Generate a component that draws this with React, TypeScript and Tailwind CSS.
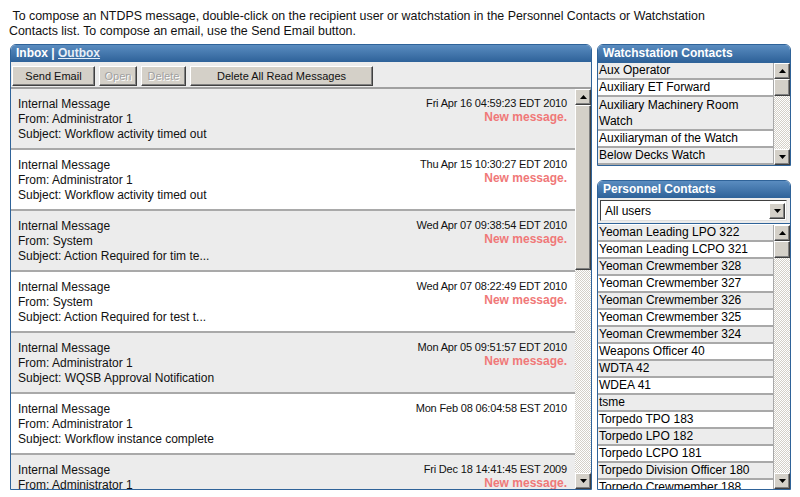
import React from "react";

const btn3d =
  "bg-[#d4d0c8] border border-t-white border-l-white border-r-[#404040] border-b-[#404040] shadow-[inset_-1px_-1px_0_#808080]";

function Arrow({ down }: { down?: boolean }) {
  return (
    <div className={`w-[16px] h-[16px] shrink-0 flex items-center justify-center ${btn3d}`}>
      <svg width="7" height="4" viewBox="0 0 7 4">
        {down ? <polygon points="0,0 7,0 3.5,4" fill="#000" /> : <polygon points="0,4 7,4 3.5,0" fill="#000" />}
      </svg>
    </div>
  );
}

function Scrollbar({ thumb }: { thumb: number }) {
  return (
    <div className="w-[16px] shrink-0 flex flex-col h-full">
      <Arrow />
      <div className={`w-[16px] shrink-0 ${btn3d}`} style={{ height: thumb }} />
      <div className="flex-1 bg-[repeating-conic-gradient(#d4d0c8_0_25%,#ffffff_0_50%)] bg-[length:2px_2px]" />
      <Arrow down />
    </div>
  );
}

const header =
  "h-[17px] shrink-0 bg-[linear-gradient(#5a8cc0,#2e6299)] text-white font-bold text-[12px] leading-[17px] px-[5px]";

const messages = [
  { from: "Administrator 1", subject: "Workflow activity timed out", date: "Fri Apr 16 04:59:23 EDT 2010", isNew: true },
  { from: "Administrator 1", subject: "Workflow activity timed out", date: "Thu Apr 15 10:30:27 EDT 2010", isNew: true },
  { from: "System", subject: "Action Required for tim te...", date: "Wed Apr 07 09:38:54 EDT 2010", isNew: true },
  { from: "System", subject: "Action Required for test t...", date: "Wed Apr 07 08:22:49 EDT 2010", isNew: true },
  { from: "Administrator 1", subject: "WQSB Approval Notification", date: "Mon Apr 05 09:51:57 EDT 2010", isNew: true },
  { from: "Administrator 1", subject: "Workflow instance complete", date: "Mon Feb 08 06:04:58 EST 2010", isNew: false },
  { from: "Administrator 1", subject: "Workflow activity timed out", date: "Fri Dec 18 14:41:45 EST 2009", isNew: true },
];

const watch = [
  "Aux Operator",
  "Auxiliary ET Forward",
  "Auxiliary Machinery Room Watch",
  "Auxiliaryman of the Watch",
  "Below Decks Watch",
];

const personnel = [
  "Yeoman Leading LPO 322",
  "Yeoman Leading LCPO 321",
  "Yeoman Crewmember 328",
  "Yeoman Crewmember 327",
  "Yeoman Crewmember 326",
  "Yeoman Crewmember 325",
  "Yeoman Crewmember 324",
  "Weapons Officer 40",
  "WDTA 42",
  "WDEA 41",
  "tsme",
  "Torpedo TPO 183",
  "Torpedo LPO 182",
  "Torpedo LCPO 181",
  "Torpedo Division Officer 180",
  "Torpedo Crewmember 188",
];

function Button({ label, w, disabled }: { label: string; w: number; disabled?: boolean }) {
  return (
    <div
      className={`h-[20px] shrink-0 flex items-center justify-center text-[11px] ${btn3d} ${
        disabled ? "text-[#a0a0a0] [text-shadow:1px_1px_0_#ffffff]" : "text-[#111]"
      }`}
      style={{ width: w }}
    >
      {label}
    </div>
  );
}

function ContactRow({ name, i }: { name: string; i: number }) {
  return (
    <div
      className={`shrink-0 border-b-2 border-[#a9a9a9] pl-[1px] text-[12px] leading-[15px] text-black ${
        i % 2 === 0 ? "bg-[#ececec]" : "bg-white"
      }`}
    >
      {name}
    </div>
  );
}

export default function App() {
  return (
    <div className="w-[800px] h-[497px] overflow-hidden bg-white text-black font-['Liberation_Sans',Arial,sans-serif]">
      <div className="pl-[9px] pt-[9px] text-[12.4px] leading-[15px] text-[#111]">
        &nbsp;To compose an NTDPS message, double-click on the recipient user or watchstation in the Personnel Contacts or Watchstation
        <br />
        Contacts list. To compose an email, use the Send Email button.
      </div>
      <div className="mt-[5px] pl-[10px] flex gap-[5px] h-[446px]">
        {/* Left panel */}
        <div className="w-[582px] h-full flex flex-col border border-[#2f6399] rounded-t-[6px] overflow-hidden">
          <div className={header}>
            Inbox | <span className="underline text-[#e6eef7]">Outbox</span>
          </div>
          <div className="h-[27px] shrink-0 bg-[#ececec] border-b-2 border-[#a0a0a0] flex gap-[4px] pl-[1px] pt-[4px]">
            <Button label="Send Email" w={83} />
            <Button label="Open" w={38} disabled />
            <Button label="Delete" w={45} disabled />
            <Button label="Delete All Read Messages" w={183} />
          </div>
          <div className="flex-1 flex min-h-0">
            <div className="flex-1 overflow-hidden">
              {messages.map((m, i) => (
                <div
                  key={i}
                  className={`h-[61px] shrink-0 border-b-2 border-[#a9a9a9] pl-[7px] pr-[8px] pt-[8px] flex justify-between ${
                    i % 2 === 0 ? "bg-[#ececec]" : "bg-white"
                  }`}
                >
                  <div className="text-[12px] leading-[15px] text-[#111]">
                    <div>Internal Message</div>
                    <div>From: {m.from}</div>
                    <div>Subject: {m.subject}</div>
                  </div>
                  <div className="text-right">
                    <div className="text-[11px] leading-[13px] tracking-[-0.18px] text-[#111]">{m.date}</div>
                    {m.isNew && (
                      <div className="text-[12px] leading-[15px] font-bold text-[#f07878]">New message.</div>
                    )}
                  </div>
                </div>
              ))}
            </div>
            <Scrollbar thumb={165} />
          </div>
        </div>

        {/* Right panel */}
        <div className="w-[194px] h-full flex flex-col">
          <div className="shrink-0 flex flex-col border border-[#2f6399] rounded-t-[6px] overflow-hidden">
            <div className={header}>Watchstation Contacts</div>
            <div className="h-[103px] flex pt-[1px] bg-[#2f6399]">
              <div className="flex-1 flex flex-col border-r border-[#a9a9a9] bg-white">
                {watch.map((w, i) => (
                  <div
                    key={w}
                    className={`shrink-0 border-b-2 border-[#a9a9a9] pl-[1px] text-[12px] text-black ${
                      i === 2 ? "leading-[16px]" : "leading-[15px]"
                    } ${i % 2 === 0 ? "bg-[#ececec]" : "bg-white"}`}
                  >
                    {i === 2 ? (
                      <>
                        Auxiliary Machinery Room
                        <br />
                        Watch
                      </>
                    ) : (
                      w
                    )}
                  </div>
                ))}
              </div>
              <Scrollbar thumb={17} />
            </div>
          </div>

          <div className="mt-[14px] flex-1 min-h-0 flex flex-col border border-[#2f6399] rounded-t-[6px] overflow-hidden">
            <div className={header}>Personnel Contacts</div>
            <div className="h-[26px] shrink-0 bg-[#ececec] border-b border-[#2f6399] pl-[2px] pr-[3px] pt-[2px]">
              <div className="h-[21px] bg-white border border-t-[#404040] border-l-[#404040] border-r-[#e0e0e0] border-b-[#e0e0e0] flex items-center justify-between pl-[4px] pr-[1px]">
                <span className="text-[12px] text-black">All users</span>
                <div className={`w-[16px] h-[16px] flex items-center justify-center ${btn3d}`}>
                  <svg width="7" height="4" viewBox="0 0 7 4">
                    <polygon points="0,0 7,0 3.5,4" fill="#000" />
                  </svg>
                </div>
              </div>
            </div>
            <div className="flex-1 min-h-0 flex pt-[1px]">
              <div className="flex-1 overflow-hidden flex flex-col border-r border-[#a9a9a9]">
                {personnel.map((p, i) => (
                  <ContactRow key={p} name={p} i={i} />
                ))}
              </div>
              <Scrollbar thumb={17} />
            </div>
          </div>
        </div>
      </div>
    </div>
  );
}
